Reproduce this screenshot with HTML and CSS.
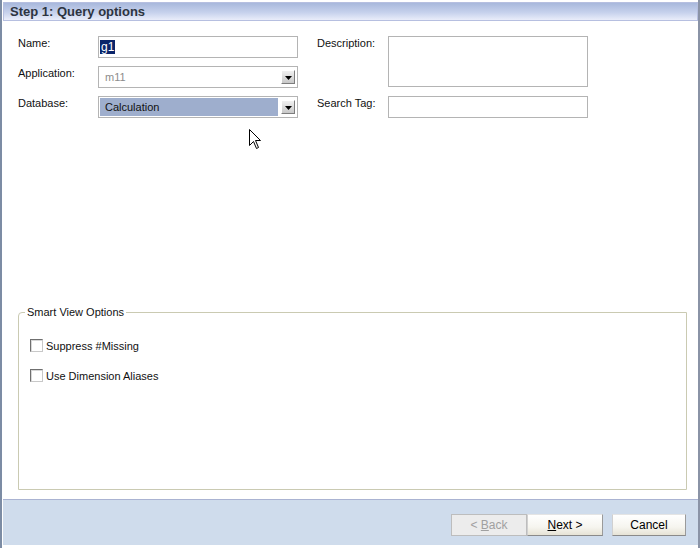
FILE: index.html
```html
<!DOCTYPE html>
<html>
<head>
<meta charset="utf-8">
<link rel="stylesheet" href="styles.css">
</head>
<body>
<div class="window">
  <div class="header">Step 1: Query options</div>
  <div class="main">
    <div class="form">
      <div class="col-left">
        <div class="row">
          <span class="label">Name:</span>
          <div class="input"><span class="sel">g1</span></div>
        </div>
        <div class="row">
          <span class="label">Application:</span>
          <div class="input combo"><span class="disabled-val">m11</span><span class="drop"><svg width="7" height="4" viewBox="0 0 7 4"><path d="M0 0h7L3.5 4z" fill="#000"/></svg></span></div>
        </div>
        <div class="row">
          <span class="label">Database:</span>
          <div class="input combo"><span class="hl">Calculation</span><span class="drop"><svg width="7" height="4" viewBox="0 0 7 4"><path d="M0 0h7L3.5 4z" fill="#000"/></svg></span></div>
        </div>
      </div>
      <div class="col-right">
        <div class="row tall">
          <span class="label">Description:</span>
          <div class="input area"></div>
        </div>
        <div class="row">
          <span class="label">Search Tag:</span>
          <div class="input"></div>
        </div>
      </div>
    </div>
    <fieldset class="group">
      <legend>Smart View Options</legend>
      <label class="check"><span class="box"></span>Suppress #Missing</label>
      <label class="check"><span class="box"></span>Use Dimension Aliases</label>
    </fieldset>
  </div>
  <div class="footer">
    <button class="btn disabled">&lt; <u>B</u>ack</button>
    <button class="btn"><u>N</u>ext &gt;</button>
    <button class="btn cancel">Cancel</button>
  </div>
  <svg class="cursor" width="12" height="20" viewBox="0 0 12 20"><path d="M0.5 0.5V16.5L4.5 12.5L7.5 19.5L9.5 18.5L6.5 11.5H11.5Z" fill="#fff" stroke="#000" stroke-width="1"/></svg>
</div>
</body>
</html>
```
FILE: styles.css
```css
html, body {
  margin: 0;
  padding: 0;
  background: #fff;
}
.window {
  position: relative;
  width: 700px;
  height: 548px;
  box-sizing: border-box;
  border-left: 2px solid #7c8ca4;
  border-right: 2px solid #8a93a6;
  padding-top: 2px;
  display: flex;
  flex-direction: column;
  font-family: "Liberation Sans", Arial, sans-serif;
  font-size: 11px;
  color: #000;
  background: #fff;
}
.header {
  margin: 0 0 0 1px;
  height: 17px;
  border: 1px solid #b6bfe0;
  background: linear-gradient(#a8b8dc, #c6d1ec 55%, #e9edfa);
  font-weight: bold;
  font-size: 13px;
  line-height: 17px;
  padding-left: 6px;
  color: #2d3440;
}
.main {
  flex: 1;
  display: flex;
  flex-direction: column;
}
.form {
  display: flex;
  padding: 15px 0 0 16px;
  height: 285px;
  box-sizing: border-box;
}
.col-left, .col-right {
  display: flex;
  flex-direction: column;
  gap: 8px;
}
.col-right {
  margin-left: 19px;
}
.row {
  display: flex;
  height: 22px;
}
.row.tall {
  height: 51px;
  margin-bottom: 1px;
}
.col-left .label {
  width: 80px;
}
.col-right .label {
  width: 71px;
}
.label {
  padding-top: 1px;
  color: #111;
}
.input {
  width: 200px;
  box-sizing: border-box;
  border: 1px solid #b4b4b4;
  background: #fff;
  display: flex;
  align-items: center;
  padding: 1px;
}
.input.area {
  height: 51px;
}
.sel {
  background: #0a246a;
  color: #fff;
  font-size: 12px;
  line-height: 14px;
  padding: 0 1px;
}
.combo {
  justify-content: space-between;
}
.disabled-val {
  color: #8c8c8c;
  padding-left: 5px;
  font-size: 11px;
}
.hl {
  flex: 1;
  align-self: stretch;
  background: #9eaecd;
  color: #111;
  padding-left: 5px;
  line-height: 18px;
  margin-right: 3px;
}
.drop {
  width: 14px;
  height: 14px;
  box-sizing: border-box;
  border: 1px solid;
  border-color: #fff #7d7d7d #7d7d7d #fff;
  background: linear-gradient(#f0f0f0, #c8c8c8);
  display: flex;
  align-items: center;
  justify-content: center;
  margin-right: 1px;
}
.drop svg {
  display: block;
  margin-top: 1px;
}
.group {
  margin: 0 11px 9px 16px;
  height: 184px;
  box-sizing: border-box;
  border: 1px solid #cacab2;
  border-radius: 4px 0 0 0;
  padding: 20px 0 0 11px;
  display: flex;
  flex-direction: column;
  gap: 15px;
}
.group legend {
  padding: 0 2px;
  margin-left: -5px;
  font-size: 11px;
  color: #111;
}
.check {
  display: flex;
  align-items: center;
  height: 15px;
  color: #111;
}
.box {
  width: 13px;
  height: 13px;
  box-sizing: border-box;
  border: 1px solid;
  border-color: #6f6f6f #c8c8c8 #c8c8c8 #6f6f6f;
  background: #fff;
  box-shadow: inset 1px 1px 0 #d8d8d8;
  margin-right: 3px;
}
.footer {
  margin: 0 0 3px 1px;
  height: 46px;
  box-sizing: border-box;
  border-top: 1px solid #aab3d2;
  background: #cfdcec;
  display: flex;
  justify-content: flex-end;
  align-items: flex-start;
  padding: 14px 12px 0 0;
}
.btn {
  width: 76px;
  height: 22px;
  box-sizing: border-box;
  font-family: "Liberation Sans", Arial, sans-serif;
  font-size: 12px;
  color: #000;
  border: 1px solid;
  border-color: #e4e4e4 #9a9a9a #8a8a8a #d0d0d0;
  background: linear-gradient(#ffffff, #f6f5ef 60%, #e6e3d6);
  padding: 0;
}
.btn.disabled {
  width: 76px;
  color: #a0a0a0;
  background: #ececec;
  border-color: #bdbdbd;
}
.btn.cancel {
  margin-left: 9px;
  width: 74px;
}
.cursor {
  position: absolute;
  left: 247px;
  top: 129px;
}
```
